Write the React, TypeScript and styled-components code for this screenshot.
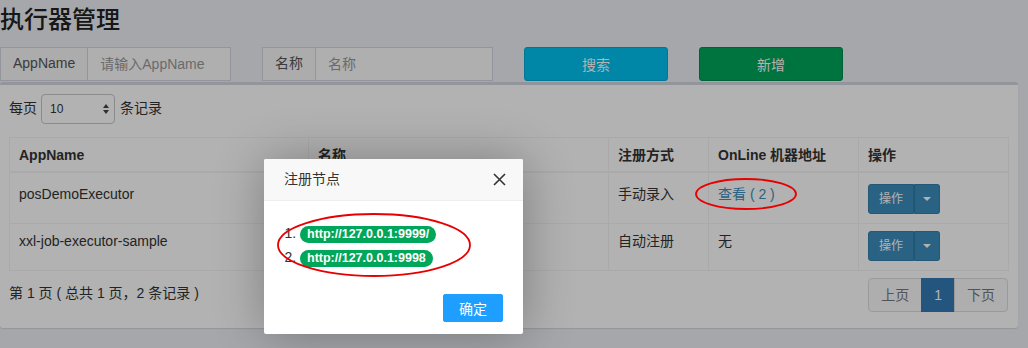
import React from "react";
import styled, { createGlobalStyle } from "styled-components";

const GlobalStyle = createGlobalStyle`
  html, body { margin: 0; padding: 0; }
  body {
    background: #ecf0f5;
    font-family: "Liberation Sans", "Noto Sans CJK SC", sans-serif;
    font-size: 14px;
    line-height: 1.42857;
    color: #333;
  }
  * { box-sizing: border-box; }
`;

const Page = styled.div`
  position: relative;
  width: 1028px;
  height: 348px;
  overflow: hidden;
  padding-right: 10px;
`;

const Title = styled.h1`
  margin: 0;
  height: 36px;
  font-size: 24px;
  line-height: 36px;
  font-weight: 500;
  color: #222;
  font-family: "Noto Sans CJK SC", sans-serif;
`;

const FilterRow = styled.div`
  display: grid;
  grid-template-columns: 231px 231px 144px 144px;
  column-gap: 31px;
  margin-top: 11px;
  height: 34px;
`;

const InputGroup = styled.div`
  display: flex;
  height: 34px;
`;

const Addon = styled.span`
  display: flex;
  align-items: center;
  padding: 0 12px;
  border: 1px solid #d2d6de;
  background: #f6f6f6;
  color: #555;
  font-size: 14px;
  white-space: nowrap;
`;

const TextInput = styled.input`
  flex: 1;
  min-width: 0;
  border: 1px solid #d2d6de;
  border-left: 0;
  padding: 6px 12px;
  font-family: inherit;
  font-size: 14px;
  color: #555;
  background: #fbfbfb;
  outline: none;
  &::placeholder { color: #999; }
`;

const ToolButton = styled.button<{ $variant: "info" | "success" }>`
  height: 34px;
  border: 1px solid ${(p) => (p.$variant === "info" ? "#00acd6" : "#008d4c")};
  background: ${(p) => (p.$variant === "info" ? "#00c0ef" : "#00a65a")};
  color: #fff;
  border-radius: 3px;
  font-family: inherit;
  font-size: 14px;
  padding: 0;
`;

const Box = styled.div`
  margin-top: 1px;
  height: 246px;
  background: #fff;
  border-top: 3px solid #d2d6de;
  border-radius: 3px;
  box-shadow: 0 1px 1px rgba(0, 0, 0, 0.1);
  padding: 9px 10px 16px 9px;
`;

const LengthRow = styled.div`
  display: flex;
  align-items: center;
  gap: 4px;
  height: 30px;
  font-size: 14px;
`;

const SelectWrap = styled.div`
  position: relative;
  width: 74px;
  height: 30px;
  margin-right: 1px;
`;

const Select = styled.select`
  appearance: none;
  -webkit-appearance: none;
  width: 100%;
  height: 100%;
  border: 1px solid #c8c8c8;
  border-radius: 4px;
  padding: 0 8px;
  font-family: inherit;
  font-size: 12px;
  color: #333;
  background: #fff;
  outline: none;
`;

const SelectArrows = styled.svg`
  position: absolute;
  right: 6px;
  top: 50%;
  transform: translateY(-50%);
  pointer-events: none;
`;

const Table = styled.table`
  margin-top: 13px;
  width: 999px;
  border-collapse: collapse;
  table-layout: fixed;
  border: 1px solid #f4f4f4;
`;

const Th = styled.th`
  text-align: left;
  font-weight: bold;
  padding: 7px 9px 6px;
  line-height: 20px;
  border: 1px solid #f4f4f4;
  border-bottom-width: 2px;
  color: #333;
`;

const Td = styled.td<{ $top: number }>`
  vertical-align: top;
  padding: ${(p) => p.$top - 1}px 9px 9px;
  line-height: 20px;
  border: 1px solid #f4f4f4;
  color: #333;
  white-space: nowrap;
  overflow: hidden;
`;

const Link = styled.a`
  color: #3c8dbc;
  text-decoration: none;
`;

const BtnGroup = styled.div`
  display: inline-flex;
`;

const ActionBtn = styled.button`
  height: 30px;
  padding: 5px 10px;
  font-family: inherit;
  font-size: 12px;
  line-height: 18px;
  background: #3c8dbc;
  border: 1px solid #367fa9;
  color: #fff;
  border-radius: 3px 0 0 3px;
`;

const CaretBtn = styled(ActionBtn)`
  display: flex;
  align-items: center;
  padding: 5px 8px;
  border-left-color: #2f7aa3;
  border-radius: 0 3px 3px 0;
`;

const Caret = styled.span`
  display: inline-block;
  width: 0;
  height: 0;
  border-top: 4px solid #fff;
  border-left: 4px solid transparent;
  border-right: 4px solid transparent;
`;

const FooterRow = styled.div`
  display: flex;
  justify-content: space-between;
  align-items: center;
  margin-top: 7px;
  width: 999px;
`;

const Info = styled.div`
  font-size: 14px;
  color: #333;
  margin-top: -3px;
`;

const Pager = styled.ul`
  display: flex;
  margin: 0;
  padding: 0;
  list-style: none;
`;

const PageItem = styled.li<{ $active?: boolean; $first?: boolean; $last?: boolean }>`
  height: 34px;
  padding: 6px 12px;
  line-height: 20px;
  font-size: 14px;
  border: 1px solid ${(p) => (p.$active ? "#337ab7" : "#ddd")};
  margin-left: ${(p) => (p.$first ? 0 : -1)}px;
  background: ${(p) => (p.$active ? "#337ab7" : "#fafafa")};
  color: ${(p) => (p.$active ? "#fff" : "#777")};
  border-radius: ${(p) => (p.$first ? "4px 0 0 4px" : p.$last ? "0 4px 4px 0" : "0")};
`;

const Overlay = styled.div`
  position: absolute;
  inset: 0;
  z-index: 10;
  background: rgba(0, 0, 0, 0.3);
`;

const Dialog = styled.div`
  position: absolute;
  left: 264px;
  top: 159px;
  z-index: 11;
  width: 259px;
  background: #fff;
  border-radius: 2px;
  box-shadow: 1px 1px 50px rgba(0, 0, 0, 0.3);
`;

const DialogHeader = styled.div`
  display: flex;
  align-items: center;
  justify-content: space-between;
  height: 42px;
  padding: 0 17px 0 20px;
  background: #f8f8f8;
  border-bottom: 1px solid #eee;
  border-radius: 2px 2px 0 0;
  font-size: 14px;
  color: #333;
`;

const DialogBody = styled.div`
  padding: 20px;
`;

const NodeList = styled.ol`
  margin: 0;
  padding-left: 16px;
  font-size: 14px;
  line-height: 24px;
  color: #333;
`;

const Badge = styled.span`
  display: inline-block;
  height: 17px;
  line-height: 17px;
  padding: 0 7px;
  border-radius: 9px;
  background: #00a65a;
  color: #fff;
  font-size: 12.5px;
  font-weight: bold;
  vertical-align: middle;
`;

const DialogFooter = styled.div`
  display: flex;
  justify-content: flex-end;
  padding: 0 15px 12px;
`;

const OkBtn = styled.button`
  margin: 5px 5px 0;
  height: 28px;
  padding: 0 15px;
  border: 1px solid #1e9fff;
  background: #1e9fff;
  color: #fff;
  border-radius: 2px;
  font-family: inherit;
  font-size: 14px;
`;

const Marks = styled.svg`
  position: absolute;
  left: 0;
  top: 0;
  z-index: 12;
  pointer-events: none;
`;

const rows = [
  { app: "posDemoExecutor", name: "posDemo", type: "手动录入", addr: "link", top: 12 },
  { app: "xxl-job-executor-sample", name: "示例执行器", type: "自动注册", addr: "无", top: 8 },
];

export default function App() {
  return (
    <>
      <GlobalStyle />
      <Page>
        <Title>执行器管理</Title>
        <FilterRow>
          <InputGroup>
            <Addon>AppName</Addon>
            <TextInput placeholder="请输入AppName" />
          </InputGroup>
          <InputGroup>
            <Addon>名称</Addon>
            <TextInput placeholder="名称" />
          </InputGroup>
          <ToolButton $variant="info">搜索</ToolButton>
          <ToolButton $variant="success">新增</ToolButton>
        </FilterRow>
        <Box>
          <LengthRow>
            <span>每页</span>
            <SelectWrap>
              <Select defaultValue="10">
                <option value="10">10</option>
                <option value="25">25</option>
                <option value="50">50</option>
              </Select>
              <SelectArrows width="6" height="10" viewBox="0 0 6 10">
                <polygon points="0,4 3,0 6,4" fill="#444" />
                <polygon points="0,6 3,10 6,6" fill="#444" />
              </SelectArrows>
            </SelectWrap>
            <span>条记录</span>
          </LengthRow>
          <Table>
            <colgroup>
              <col style={{ width: 299 }} />
              <col style={{ width: 300 }} />
              <col style={{ width: 100 }} />
              <col style={{ width: 150 }} />
              <col style={{ width: 150 }} />
            </colgroup>
            <thead>
              <tr>
                <Th>AppName</Th>
                <Th>名称</Th>
                <Th>注册方式</Th>
                <Th>OnLine 机器地址</Th>
                <Th>操作</Th>
              </tr>
            </thead>
            <tbody>
              {rows.map((r) => (
                <tr key={r.app}>
                  <Td $top={r.top}>{r.app}</Td>
                  <Td $top={r.top}>{r.name}</Td>
                  <Td $top={r.top}>{r.type}</Td>
                  <Td $top={r.top}>
                    {r.addr === "link" ? <Link href="#">查看 ( 2 )</Link> : r.addr}
                  </Td>
                  <Td $top={r.top}>
                    <BtnGroup>
                      <ActionBtn>操作</ActionBtn>
                      <CaretBtn>
                        <Caret />
                      </CaretBtn>
                    </BtnGroup>
                  </Td>
                </tr>
              ))}
            </tbody>
          </Table>
          <FooterRow>
            <Info>第 1 页 ( 总共 1 页，2 条记录 )</Info>
            <Pager>
              <PageItem $first>上页</PageItem>
              <PageItem $active>1</PageItem>
              <PageItem $last>下页</PageItem>
            </Pager>
          </FooterRow>
        </Box>
        <Overlay />
        <Dialog>
          <DialogHeader>
            <span>注册节点</span>
            <svg width="13" height="13" viewBox="0 0 13 13">
              <path d="M1 1 L12 12 M12 1 L1 12" stroke="#333" strokeWidth="1.6" />
            </svg>
          </DialogHeader>
          <DialogBody>
            <NodeList>
              <li>
                <Badge>http://127.0.0.1:9999/</Badge>
              </li>
              <li>
                <Badge>http://127.0.0.1:9998</Badge>
              </li>
            </NodeList>
          </DialogBody>
          <DialogFooter>
            <OkBtn>确定</OkBtn>
          </DialogFooter>
        </Dialog>
        <Marks width="1028" height="348" viewBox="0 0 1028 348">
          <ellipse cx="746" cy="194" rx="50" ry="15" fill="none" stroke="#e80000" strokeWidth="1.8" />
          <ellipse cx="374" cy="245" rx="96" ry="31" fill="none" stroke="#e80000" strokeWidth="1.8" />
        </Marks>
      </Page>
    </>
  );
}
